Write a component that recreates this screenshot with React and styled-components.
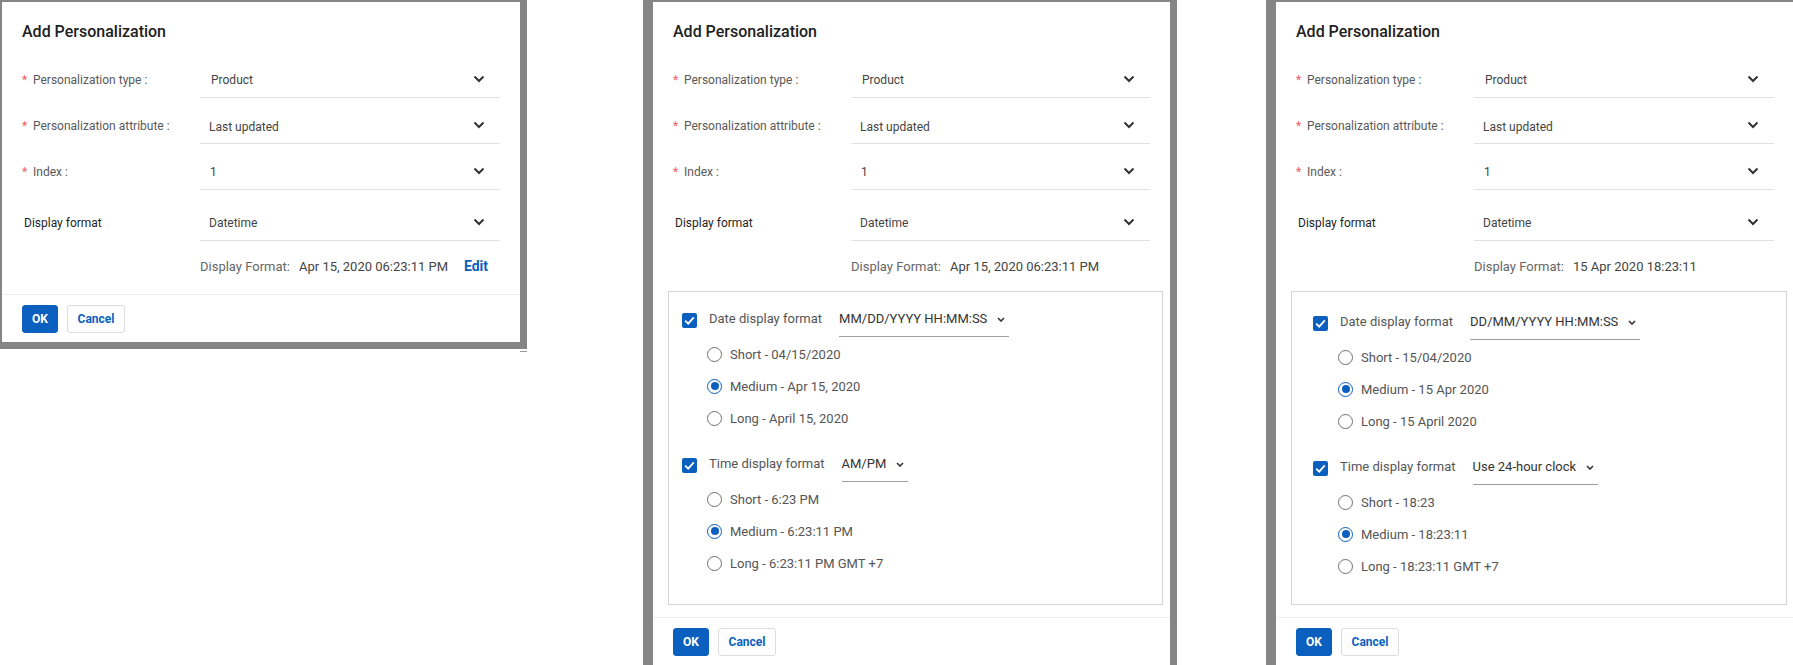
import React from "react";
import styled, { createGlobalStyle } from "styled-components";

const GlobalStyle = createGlobalStyle`
  html, body {
    margin: 0;
    padding: 0;
    background: #fff;
    overflow: hidden;
  }
  body {
    font-family: Roboto, "Liberation Sans", Arial, sans-serif;
  }
`;

const Page = styled.div`
  display: flex;
  align-items: flex-start;
  width: 1793px;
  height: 665px;
  overflow: hidden;
`;

const FrameColumn = styled.div`
  flex: 0 0 auto;
  display: flex;
  flex-direction: column;
  margin-left: ${(p) => p.$offset}px;
`;

const Frame = styled.div`
  border-style: solid;
  border-color: #858585;
  border-width: 2px ${(p) => p.$right}px ${(p) => p.$bottom}px
    ${(p) => p.$left}px;
  background: #fff;
`;

// small stray mark under the first dialog's corner
const Tick = styled.div`
  align-self: flex-end;
  width: 7px;
  height: 1px;
  margin-top: 2px;
  background: #9a9a9a;
`;

const Dialog = styled.div`
  width: ${(p) => p.$width}px;
  display: flex;
  flex-direction: column;
`;

const Title = styled.div`
  padding: 20px 20px 0;
  font-size: 16px;
  line-height: 20px;
  font-weight: 500;
  color: #212121;
`;

const Form = styled.div`
  padding: 19px 20px 0;
  display: flex;
  flex-direction: column;
`;

const Row = styled.div`
  display: flex;
  align-items: center;
  margin-top: ${(p) => p.$gap}px;
  &:first-child {
    margin-top: 0;
  }
`;

const Label = styled.div`
  width: ${(p) => (p.$plain ? 176 : 178)}px;
  padding-left: ${(p) => (p.$plain ? 2 : 0)}px;
  flex-shrink: 0;
  display: flex;
  align-items: center;
  font-size: 12px;
  line-height: 16px;
  color: ${(p) => (p.$plain ? "#1f1f1f" : "#595959")};
`;

const Asterisk = styled.span`
  width: 11px;
  color: #f55a63;
  font-size: 12px;
`;

const Colon = styled.span`
  margin-left: 3px;
`;

const Select = styled.div`
  flex: 1;
  height: 36px;
  display: flex;
  align-items: center;
  justify-content: space-between;
  padding: 0 15px 0 ${(p) => p.$inset}px;
  border-bottom: 1px solid #e2e2e2;
  font-size: 12px;
  color: #444;
`;

const SelectValue = styled.span`
  padding-top: ${(p) => p.$drop}px;
`;

const DisplayLine = styled.div`
  display: flex;
  align-items: center;
  height: 20px;
  margin: 15px 20px 0 198px;
  font-size: 13px;
  color: #666;
`;

const DisplayValue = styled.span`
  margin-left: 9px;
  color: #444;
`;

const EditLink = styled.span`
  margin-left: auto;
  margin-right: 12px;
  font-size: 14px;
  font-weight: 700;
  color: #0b5fbf;
`;

const FormatBox = styled.div`
  height: 314px;
  box-sizing: border-box;
  margin: 15px 7px 0 15px;
  padding: ${(p) => p.$top}px 0 0 ${(p) => p.$left}px;
  border: 1px solid #d4d4d4;
`;

const FormatRow = styled.div`
  display: flex;
  align-items: flex-start;
  margin-top: ${(p) => p.$gap}px;
  font-size: 13px;
  line-height: 16px;
`;

const Checkbox = styled.span`
  width: 15px;
  height: 15px;
  margin-top: 2px;
  border-radius: 2px;
  background: #0b5fbf;
  display: flex;
  align-items: center;
  justify-content: center;
`;

const CheckLabel = styled.span`
  margin-left: 12px;
  color: #555;
`;

const InlineSelect = styled.span`
  margin-left: 17px;
  display: inline-flex;
  align-items: center;
  gap: 10px;
  padding: 0 4px 9px 0;
  border-bottom: 1px solid #a0a0a0;
  color: #333;
`;

const RadioList = styled.div`
  margin-top: 1px;
  padding-left: 25px;
  display: flex;
  flex-direction: column;
`;

const RadioItem = styled.div`
  height: 32px;
  display: flex;
  align-items: center;
  gap: 8px;
  font-size: 13px;
  color: #555;
`;

const RadioCircle = styled.span`
  width: 13px;
  height: 13px;
  border-radius: 50%;
  border: 1.5px solid ${(p) => (p.$checked ? "#0b5fbf" : "#707070")};
  display: flex;
  align-items: center;
  justify-content: center;
  &::after {
    content: "";
    width: 8px;
    height: 8px;
    border-radius: 50%;
    background: ${(p) => (p.$checked ? "#0b5fbf" : "transparent")};
  }
`;

const Footer = styled.div`
  margin-top: ${(p) => p.$gap}px;
  border-top: 1px solid #eeeeee;
  padding: 10px 20px 9px;
  display: flex;
  gap: 9px;
`;

const Button = styled.button`
  height: 28px;
  box-sizing: border-box;
  padding: 0;
  width: ${(p) => (p.$primary ? 36 : 58)}px;
  border-radius: 3px;
  border: 1px solid ${(p) => (p.$primary ? "#0b5fbf" : "#dddddd")};
  background: ${(p) => (p.$primary ? "#0b5fbf" : "#fff")};
  color: ${(p) => (p.$primary ? "#fff" : "#0b5fbf")};
  font-family: Roboto, "Liberation Sans", Arial, sans-serif;
  font-size: 12px;
  font-weight: 700;
`;

const Chevron = () => (
  <svg width="12" height="8" viewBox="0 0 12 8">
    <path d="M1.5 1.5l4.5 4.5 4.5-4.5" stroke="#333" strokeWidth="2" fill="none" />
  </svg>
);

const SmallChevron = () => (
  <svg width="8" height="5" viewBox="0 0 8 5">
    <path d="M1 1l3 3 3-3" stroke="#333" strokeWidth="1.6" fill="none" />
  </svg>
);

const CheckMark = () => (
  <svg width="11" height="9" viewBox="0 0 11 9">
    <path d="M1.2 4.6l3 3 5.6-6.2" stroke="#fff" strokeWidth="1.8" fill="none" />
  </svg>
);

const fields = [
  { label: "Personalization type", value: "Product", required: true, inset: 11, drop: 1, gap: 9 },
  { label: "Personalization attribute", value: "Last updated", required: true, inset: 9, drop: 3, gap: 9 },
  { label: "Index", value: "1", required: true, inset: 10, drop: 1, gap: 9 },
  { label: "Display format", value: "Datetime", required: false, inset: 9, drop: 1, gap: 14 },
];

const panels = [
  {
    offset: 0,
    left: 2,
    right: 7,
    bottom: 7,
    width: 518,
    display: "Apr 15, 2020 06:23:11 PM",
    edit: true,
  },
  {
    offset: 116,
    left: 10,
    right: 7,
    bottom: 0,
    width: 517,
    display: "Apr 15, 2020 06:23:11 PM",
    box: {
      top: 19,
      left: 13,
      date: "MM/DD/YYYY HH:MM:SS",
      dateOptions: ["Short - 04/15/2020", "Medium - Apr 15, 2020", "Long - April 15, 2020"],
      time: "AM/PM",
      timeOptions: ["Short - 6:23 PM", "Medium - 6:23:11 PM", "Long - 6:23:11 PM GMT +7"],
    },
  },
  {
    offset: 89,
    left: 10,
    right: 0,
    bottom: 0,
    width: 518,
    display: "15 Apr 2020 18:23:11",
    box: {
      top: 22,
      left: 21,
      date: "DD/MM/YYYY HH:MM:SS",
      dateOptions: ["Short - 15/04/2020", "Medium - 15 Apr 2020", "Long - 15 April 2020"],
      time: "Use 24-hour clock",
      timeOptions: ["Short - 18:23", "Medium - 18:23:11", "Long - 18:23:11 GMT +7"],
    },
  },
];

const FormatGroup = ({ label, value, options, gap }) => (
  <>
    <FormatRow $gap={gap}>
      <Checkbox>
        <CheckMark />
      </Checkbox>
      <CheckLabel>{label}</CheckLabel>
      <InlineSelect>
        {value}
        <SmallChevron />
      </InlineSelect>
    </FormatRow>
    <RadioList>
      {options.map((option, index) => (
        <RadioItem key={option}>
          <RadioCircle $checked={index === 1} />
          {option}
        </RadioItem>
      ))}
    </RadioList>
  </>
);

const PersonalizationDialog = ({ panel }) => (
  <FrameColumn $offset={panel.offset}>
    <Frame $left={panel.left} $right={panel.right} $bottom={panel.bottom}>
      <Dialog $width={panel.width}>
        <Title>Add Personalization</Title>
        <Form>
          {fields.map((field) => (
            <Row key={field.label} $gap={field.gap}>
              <Label $plain={!field.required}>
                {field.required && <Asterisk>*</Asterisk>}
                {field.label}
                {field.required && <Colon>:</Colon>}
              </Label>
              <Select $inset={field.inset}>
                <SelectValue $drop={field.drop}>{field.value}</SelectValue>
                <Chevron />
              </Select>
            </Row>
          ))}
        </Form>
        <DisplayLine>
          Display Format:
          <DisplayValue>{panel.display}</DisplayValue>
          {panel.edit && <EditLink>Edit</EditLink>}
        </DisplayLine>

        {panel.box && (
          <FormatBox $top={panel.box.top} $left={panel.box.left}>
            <FormatGroup
              label="Date display format"
              value={panel.box.date}
              options={panel.box.dateOptions}
              gap={0}
            />
            <FormatGroup
              label="Time display format"
              value={panel.box.time}
              options={panel.box.timeOptions}
              gap={22}
            />
          </FormatBox>
        )}

        <Footer $gap={panel.box ? 12 : 18}>
          <Button $primary>OK</Button>
          <Button>Cancel</Button>
        </Footer>
      </Dialog>
    </Frame>
    {panel.edit && <Tick />}
  </FrameColumn>
);

const App = () => (
  <>
    <GlobalStyle />
    <Page>
      {panels.map((panel, index) => (
        <PersonalizationDialog key={index} panel={panel} />
      ))}
    </Page>
  </>
);

export default App;
